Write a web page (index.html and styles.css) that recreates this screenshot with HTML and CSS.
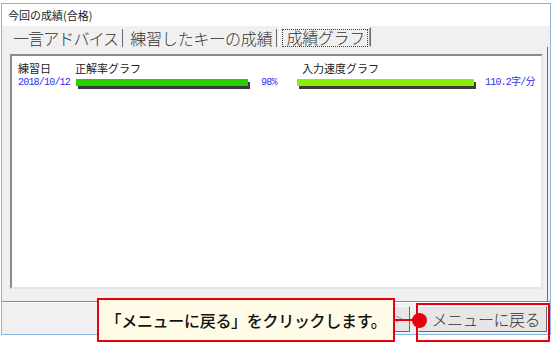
FILE: index.html
```html
<!DOCTYPE html>
<html lang="ja">
<head>
    <meta charset="UTF-8">
    <meta name="viewport" content="width=device-width, initial-scale=1.0">
    <title>今回の成績(合格)</title>
    <link rel="stylesheet" href="styles.css">
</head>
<body>
    <div class="window">
        <div class="titlebar">今回の成績(合格)</div>
        <div class="client">
            <div class="tabs">
                <div class="tab first">一言アドバイス</div>
                <div class="tab second">練習したキーの成績</div>
                <div class="tab active"><span class="focus">成績グラフ</span></div>
            </div>
            <div class="page">
                <div class="listbox">
                    <div class="grade-row head">
                        <span>練習日</span>
                        <span>正解率グラフ</span>
                        <span></span>
                        <span class="speed-label">入力速度グラフ</span>
                        <span></span>
                    </div>
                    <div class="grade-row data">
                        <span class="num">2018/10/12</span>
                        <span class="bar-cell"><span class="bar rate" style="width: 172px"></span></span>
                        <span class="num">98%</span>
                        <span class="bar-cell"><span class="bar speed" style="width: 177px"></span></span>
                        <span class="num">110.2字/分</span>
                    </div>
                </div>
            </div>
            <div class="separator"></div>
            <div class="bottom-bar">
                <button class="btn hidden-btn">
                    <svg width="8" height="8" viewBox="0 0 8 8"><path d="M1 1 L7 4 L1 7" fill="none" stroke="#9a9a9a" stroke-width="1"/></svg>
                </button>
                <button class="btn menu-btn">メニューに戻る</button>
            </div>
        </div>
    </div>

    <div class="callout">「メニューに戻る」をクリックします。</div>
    <div class="connector"></div>
    <div class="dot"></div>
    <div class="highlight"></div>
</body>
</html>
```

FILE: styles.css
```css
body {
    margin: 0;
    padding: 3px 0 0 1px;
    background-color: white;
    font-family: "Noto Sans CJK JP", "Noto Sans", sans-serif;
    color: #222;
    width: 554px;
    height: 344px;
    overflow: hidden;
    position: relative;
    box-sizing: border-box;
}

.window {
    width: 548px;
    height: 330px;
    border: 1px solid #8ab6e2;
    display: flex;
    flex-direction: column;
}

.titlebar {
    height: 22px;
    line-height: 22px;
    padding-left: 6px;
    font-size: 11px;
    background-color: white;
}

.client {
    flex: 1;
    background-color: #f0f0f0;
    display: flex;
    flex-direction: column;
}

.tabs {
    height: 21px;
    display: flex;
    align-items: flex-end;
    padding-left: 8px;
    font-size: 16px;
    font-weight: 300;
    color: #333;
}

    .tabs .tab {
        height: 18px;
        line-height: 18px;
        padding: 0 4px 0 3px;
        border-right: 1px solid #6a6a6a;
    }

    .tabs .tab.first {
        letter-spacing: -0.9px;
    }

    .tabs .tab.second {
        padding-left: 7px;
        letter-spacing: -0.2px;
    }

    .tabs .tab.active {
        height: 20px;
        margin-left: 2px;
        padding: 1px 2px 0 2px;
        box-sizing: border-box;
        border: 1px solid;
        border-color: #fff #6a6a6a #f0f0f0 #fff;
        box-shadow: inset -1px 0 0 #a0a0a0;
        letter-spacing: -0.3px;
    }

        .tabs .tab.active .focus {
            display: block;
            height: 16px;
            line-height: 15px;
            padding: 0 2px 0 3px;
            border: 1px dotted #444;
        }

.page {
    flex: 1;
    padding: 7px 6px 12px 8px;
    border-right: 1px solid #6a6a6a;
    margin-right: 2px;
    display: flex;
}

.listbox {
    flex: 1;
    background-color: white;
    border: 2px solid;
    border-color: #8a8a8a #e6e6e6 #e6e6e6 #8a8a8a;
    padding: 5px 6px;
}

.grade-row {
    display: grid;
    grid-template-columns: 57px 186px 36px 188px auto;
    align-items: center;
    white-space: nowrap;
}

    .grade-row.head {
        font-size: 11px;
        line-height: 14px;
        color: #222;
    }

    .grade-row .speed-label {
        padding-left: 5px;
    }

    .grade-row.data {
        height: 13px;
        margin-top: 1px;
    }

.num {
    font-family: "Liberation Mono", "Noto Sans CJK JP", monospace;
    font-size: 10px;
    letter-spacing: -0.8px;
    color: #3030f0;
    line-height: 12px;
}

.bar-cell {
    display: flex;
    align-items: center;
}

.bar {
    display: block;
    height: 7px;
    margin-left: 1px;
    box-shadow: 2px 3px 0 #3c3c3c;
}

    .bar.rate {
        background-color: #27d000;
    }

    .bar.speed {
        margin-left: 0;
        background-color: #8aee08;
    }

.separator {
    height: 1px;
    background-color: #8a8a8a;
    border-bottom: 1px solid #fff;
}

.bottom-bar {
    height: 31px;
    display: flex;
    justify-content: flex-end;
    align-items: flex-start;
    padding: 3px 3px 0 0;
    box-sizing: border-box;
    gap: 8px;
}

.btn {
    height: 26px;
    font-family: "Noto Sans CJK JP", sans-serif;
    font-size: 16px;
    font-weight: 300;
    color: #333;
    background-color: #e6e6e6;
    border: 1px solid;
    border-color: #fcfcfc #6a6a6a #6a6a6a #fcfcfc;
    line-height: 22px;
    white-space: nowrap;
}

.menu-btn {
    padding: 0 6px 0 12px;
    letter-spacing: -0.5px;
}

.hidden-btn {
    width: 96px;
    padding: 0 6px 0 0;
    display: flex;
    align-items: center;
    justify-content: flex-end;
}

.callout {
    position: absolute;
    left: 97px;
    top: 298px;
    width: 294px;
    height: 40px;
    border: 2px solid #e60012;
    background-color: #fffbe6;
    font-size: 16px;
    font-weight: 500;
    color: #111;
    line-height: 40px;
    text-align: center;
    letter-spacing: -0.3px;
}

.connector {
    position: absolute;
    left: 395px;
    top: 319px;
    width: 20px;
    height: 2px;
    background-color: #e60012;
}

.dot {
    position: absolute;
    left: 412px;
    top: 313px;
    width: 15px;
    height: 15px;
    border-radius: 50%;
    background-color: #e60012;
}

.highlight {
    position: absolute;
    left: 416px;
    top: 303px;
    width: 130px;
    height: 35px;
    border: 2px solid #e60012;
}
```
